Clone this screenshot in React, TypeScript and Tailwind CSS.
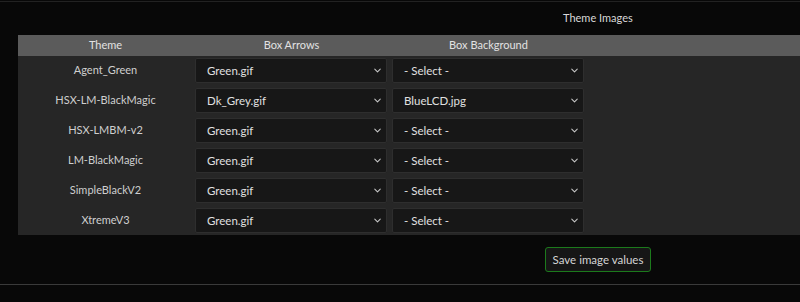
import { ChevronDown } from 'lucide-react';

type Row = { theme: string; arrows: string; background: string };

const rows: Row[] = [
  { theme: 'Agent_Green', arrows: 'Green.gif', background: '- Select -' },
  { theme: 'HSX-LM-BlackMagic', arrows: 'Dk_Grey.gif', background: 'BlueLCD.jpg' },
  { theme: 'HSX-LMBM-v2', arrows: 'Green.gif', background: '- Select -' },
  { theme: 'LM-BlackMagic', arrows: 'Green.gif', background: '- Select -' },
  { theme: 'SimpleBlackV2', arrows: 'Green.gif', background: '- Select -' },
  { theme: 'XtremeV3', arrows: 'Green.gif', background: '- Select -' },
];

function FakeSelect({ value }: { value: string }) {
  return (
    <div className="ml-[2px] w-[192px] h-[25px] flex items-center justify-between pl-[11px] pr-[3px] rounded-[2px] border border-[#2e2e2e] bg-[#171717] text-[#e0e0e0] text-[11.5px]">
      <span>{value}</span>
      <ChevronDown size={11} strokeWidth={2.2} className="text-[#c8c8c8]" />
    </div>
  );
}

export default function App() {
  return (
    <div
      className="w-[800px] h-[302px] bg-[#080808] overflow-hidden text-[11px]"
      style={{ fontFamily: 'Lato, "Open Sans", sans-serif' }}
    >
      <div className="h-[1px] mt-[1px] bg-[#222222]" />
      <div className="h-[33px] flex items-center pl-[563px] text-[#d8d8d8]">Theme Images</div>

      <div className="ml-[18px] bg-[#262626]">
        <div className="grid grid-cols-[175px_197px_197px_1fr] h-[21px] items-center bg-[#5b5b5b] text-[#e2e2e2]">
          <div className="text-center">Theme</div>
          <div className="text-center">Box Arrows</div>
          <div className="text-center">Box Background</div>
          <div />
        </div>
        <div className="pt-[2px] pb-[2px] flex flex-col gap-[5px]">
          {rows.map((r) => (
            <div key={r.theme} className="grid grid-cols-[175px_197px_197px_1fr] items-center">
              <div className="text-center text-[#cfcfcf]">{r.theme}</div>
              <FakeSelect value={r.arrows} />
              <FakeSelect value={r.background} />
              <div />
            </div>
          ))}
        </div>
      </div>

      <div className="h-[49px] flex items-center pl-[545px]">
        <button
          type="button"
          className="w-[106px] h-[25px] rounded-[3px] border border-[#1c7a1c] bg-[#161616] text-[#d4d4d4] text-[11.5px]"
        >
          Save image values
        </button>
      </div>
      <div className="h-[1px] bg-[#3a3a3a]" />
    </div>
  );
}
